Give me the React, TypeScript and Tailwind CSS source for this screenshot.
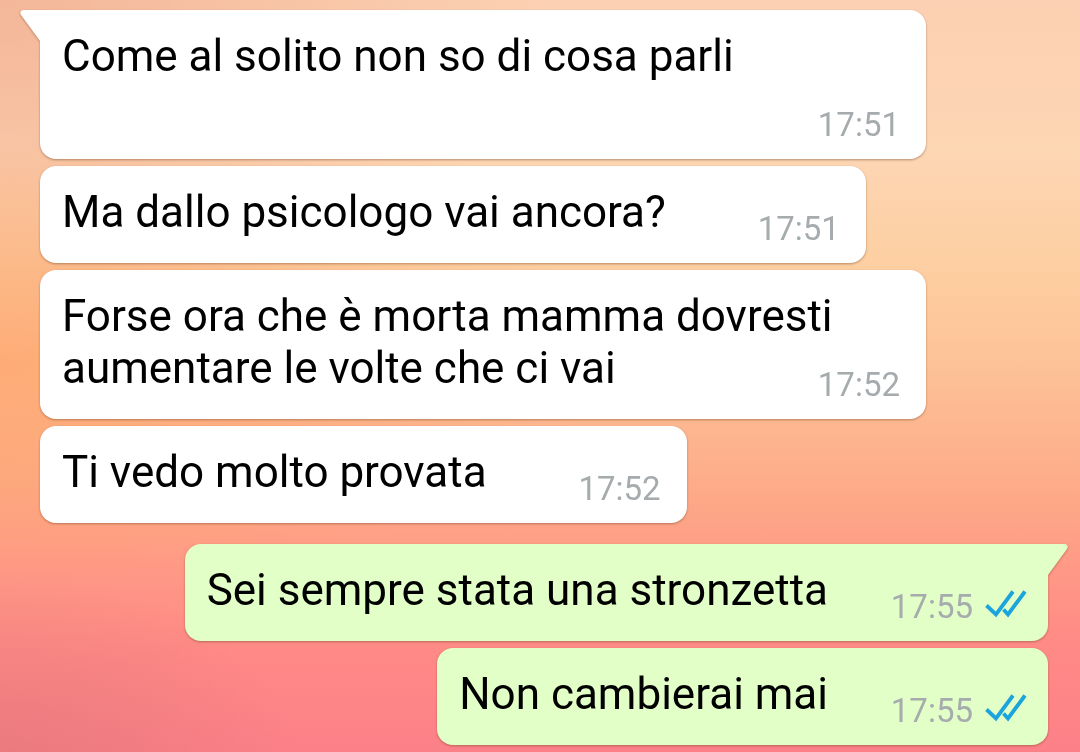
// App.tsx
interface Message {
  text: string;
  time: string;
  outgoing?: boolean;
  firstInGroup?: boolean;
}

const messages: Message[] = [
  { text: 'Come al solito non so di cosa parli', time: '17:51', firstInGroup: true },
  { text: 'Ma dallo psicologo vai ancora?', time: '17:51' },
  { text: 'Forse ora che è morta mamma dovresti aumentare le volte che ci vai', time: '17:52' },
  { text: 'Ti vedo molto provata', time: '17:52' },
  { text: 'Sei sempre stata una stronzetta', time: '17:55', outgoing: true, firstInGroup: true },
  { text: 'Non cambierai mai', time: '17:55', outgoing: true },
];

function ReadTicks() {
  return (
    <svg
      className="w-11 h-10"
      viewBox="0 0 44 40"
      fill="none"
      stroke="#1ba5dc"
      strokeWidth="3.8"
      role="img"
      aria-label="Letto"
    >
      <path d="M2.5 18.5 L12 27.5 L29 4.5" />
      <path d="M19.5 22.5 L24 27.5 L41 4.5" />
    </svg>
  );
}

function Tail({ outgoing }: { outgoing?: boolean }) {
  return outgoing ? (
    <svg className="absolute top-0 left-full w-5 h-8 overflow-visible" viewBox="0 0 20 32" fill="#e1ffc7">
      <path d="M-1 0 H17 Q21 1 19 5 L0 31 H-1 Z" />
    </svg>
  ) : (
    <svg className="absolute top-0 right-full w-5 h-8 overflow-visible" viewBox="0 0 20 32" fill="#ffffff">
      <path d="M21 0 H3 Q-1 1 1 5 L20 31 H21 Z" />
    </svg>
  );
}

function Bubble({ message }: { message: Message }) {
  const { text, time, outgoing, firstInGroup } = message;
  const side = outgoing ? 'self-end pr-5 bg-[#e1ffc7]' : 'self-start pr-[26px] bg-white';
  const corner = firstInGroup ? (outgoing ? 'rounded-tr-none mt-3.5' : 'rounded-tl-none') : '';

  return (
    <li
      className={`relative grid max-w-[886px] rounded-2xl pt-5 pb-[13px] pl-[22px] drop-shadow-[0_1px_1px_rgba(120,70,40,0.5)] ${side} ${corner}`}
    >
      {firstInGroup && <Tail outgoing={outgoing} />}
      <p className="col-start-1 row-start-1 mb-3 text-[44px] leading-[52px] text-black">
        {text}
        {/* keeps the last line clear of the time */}
        <span className={`inline-block h-4 ${outgoing ? 'w-[200px]' : 'w-[174px]'}`} />
      </p>
      <div className="col-start-1 row-start-1 self-end justify-self-end flex items-center gap-[11px]">
        <time className="text-[33px] leading-[42px] text-[#a6abad]">{time}</time>
        {outgoing && <ReadTicks />}
      </div>
    </li>
  );
}

export default function App() {
  return (
    <main
      className="min-h-screen bg-[radial-gradient(ellipse_at_0%_48%,rgba(255,150,85,0.5),transparent_40%),radial-gradient(ellipse_at_0%_105%,rgba(215,115,115,0.55),transparent_20%),radial-gradient(ellipse_at_0%_0%,rgba(238,165,135,0.6),transparent_35%),linear-gradient(to_bottom,#fcd0b2_0%,#fdd6b4_20%,#fdcfa2_35%,#fdc096_50%,#fdab88_65%,#ff9886_76%,#ff8a86_86%,#fc8088_100%)] pt-2.5 pl-10 pr-8"
      style={{ fontFamily: 'Roboto, sans-serif' }}
    >
      <ul className="flex flex-col gap-[7px]">
        {messages.map((message, index) => (
          <Bubble key={index} message={message} />
        ))}
      </ul>
    </main>
  );
}
